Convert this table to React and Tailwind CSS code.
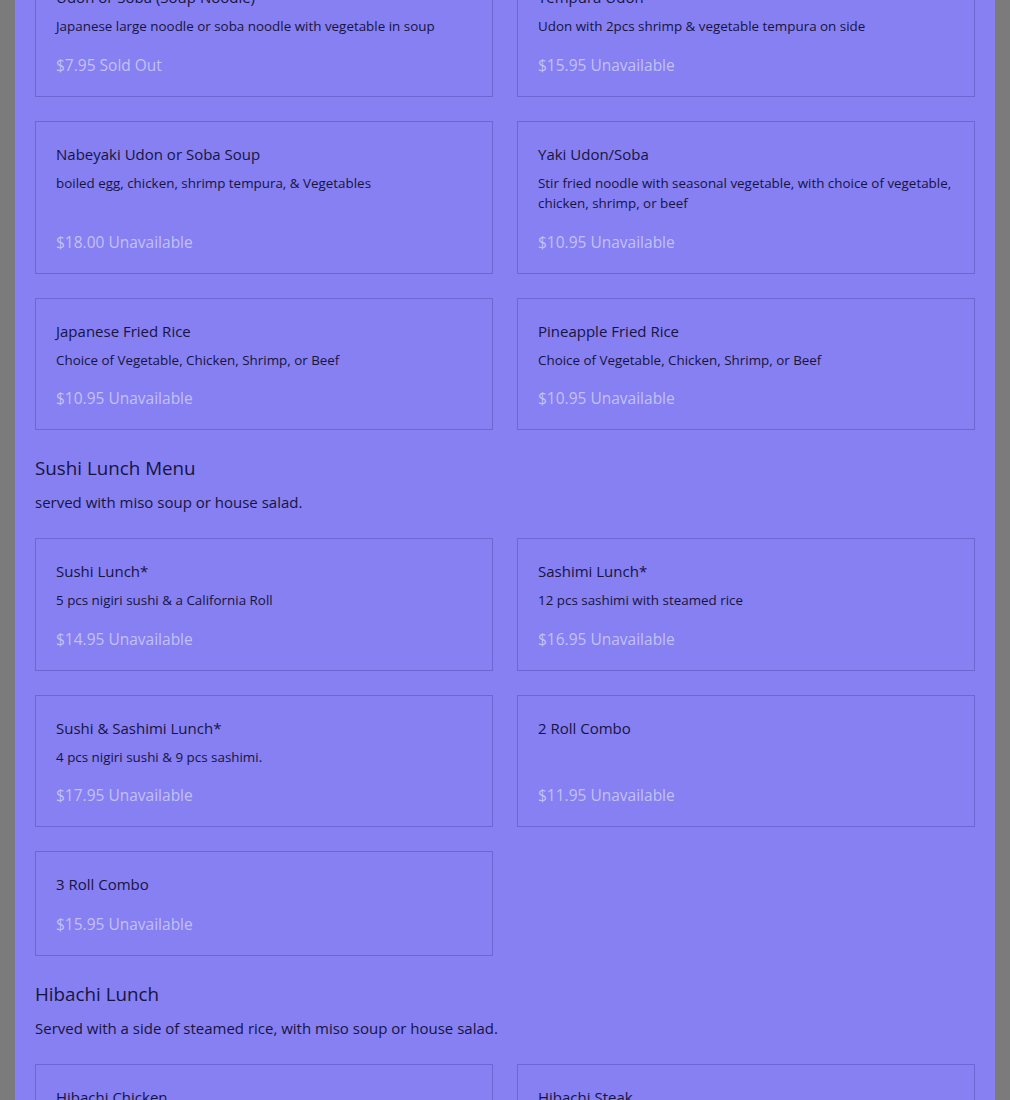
import React from 'react';

const sections = [
    {
        title: null,
        items: [
            { name: 'Udon or Soba (Soup Noodle)', desc: 'Japanese large noodle or soba noodle with vegetable in soup', price: '$7.95', status: 'Sold Out' },
            { name: 'Tempura Udon', desc: 'Udon with 2pcs shrimp & vegetable tempura on side', price: '$15.95', status: 'Unavailable' },
            { name: 'Nabeyaki Udon or Soba Soup', desc: 'boiled egg, chicken, shrimp tempura, & Vegetables', price: '$18.00', status: 'Unavailable' },
            { name: 'Yaki Udon/Soba', desc: 'Stir fried noodle with seasonal vegetable, with choice of vegetable, chicken, shrimp, or beef', price: '$10.95', status: 'Unavailable' },
            { name: 'Japanese Fried Rice', desc: 'Choice of Vegetable, Chicken, Shrimp, or Beef', price: '$10.95', status: 'Unavailable' },
            { name: 'Pineapple Fried Rice', desc: 'Choice of Vegetable, Chicken, Shrimp, or Beef', price: '$10.95', status: 'Unavailable' },
        ],
    },
    {
        title: 'Sushi Lunch Menu',
        subtitle: 'served with miso soup or house salad.',
        items: [
            { name: 'Sushi Lunch*', desc: '5 pcs nigiri sushi & a California Roll', price: '$14.95', status: 'Unavailable' },
            { name: 'Sashimi Lunch*', desc: '12 pcs sashimi with steamed rice', price: '$16.95', status: 'Unavailable' },
            { name: 'Sushi & Sashimi Lunch*', desc: '4 pcs nigiri sushi & 9 pcs sashimi.', price: '$17.95', status: 'Unavailable' },
            { name: '2 Roll Combo', desc: null, price: '$11.95', status: 'Unavailable' },
            { name: '3 Roll Combo', desc: null, price: '$15.95', status: 'Unavailable' },
        ],
    },
    {
        title: 'Hibachi Lunch',
        subtitle: 'Served with a side of steamed rice, with miso soup or house salad.',
        items: [
            { name: 'Hibachi Chicken', desc: 'Chicken, zucchini, onion, mushroom and broccoli', price: '$12.95', status: 'Unavailable' },
            { name: 'Hibachi Steak', desc: 'Steak, zucchini, onion, mushroom and broccoli', price: '$14.95', status: 'Unavailable' },
        ],
    },
];

const MenuCard = ({ item }) => (
    <div className="flex flex-col border border-[#6d67d3] px-5 pt-[22px] pb-[21px]">
        <div className="text-[15px] leading-5 text-[#17143f]">{item.name}</div>
        {item.desc && (
            <div className="mt-[9px] text-[13.4px] leading-[20.5px] text-[#17143f]">{item.desc}</div>
        )}
        <div className={`mt-auto text-[15.5px] leading-5 text-[#c3c1f4] ${item.desc ? 'pt-[18px]' : 'pt-[20px]'}`}>
            {item.price} {item.status}
        </div>
    </div>
);

export default function App() {
    return (
        <div className="min-h-[1100px] bg-[#7b7b7b] px-[15px]" style={{ fontFamily: '"Open Sans", "Liberation Sans", sans-serif' }}>
            <div className="min-h-[1100px] overflow-hidden bg-[#8680f2] px-5">
                <div className="-mt-[36px]">
                    {sections.map((section, i) => (
                        <div key={i} className={i > 0 ? 'mt-[26px]' : ''}>
                            {section.title && (
                                <div className="mb-[26px]">
                                    <h2 className="text-[18.8px] leading-6 text-[#17143f]">{section.title}</h2>
                                    <p className="mt-3 text-[15px] leading-5 text-[#17143f]">{section.subtitle}</p>
                                </div>
                            )}
                            <div className="grid grid-cols-2 gap-6">
                                {section.items.map((item) => (
                                    <MenuCard key={item.name} item={item} />
                                ))}
                            </div>
                        </div>
                    ))}
                </div>
            </div>
        </div>
    );
}
